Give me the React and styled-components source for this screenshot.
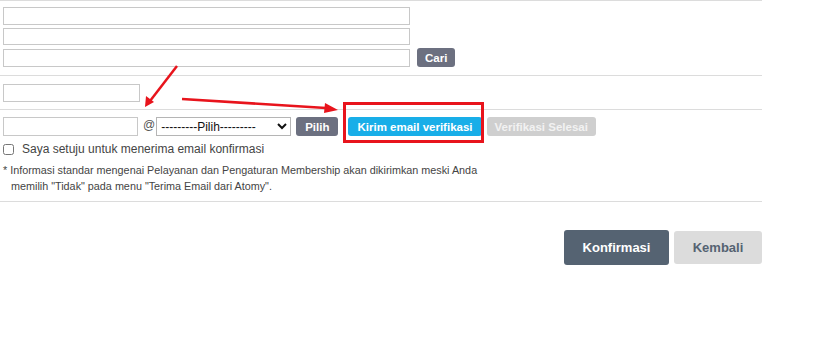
import React from "react";
import styled, { createGlobalStyle } from "styled-components";

const GlobalStyle = createGlobalStyle`
  html, body {
    margin: 0;
    padding: 0;
    background: #fff;
    font-family: "Liberation Sans", Arial, sans-serif;
    color: #333;
  }
`;

const Page = styled.div`
  position: relative;
  width: 762px;
  height: 347px;
`;

const Section = styled.div`
  border-top: 1px solid #dcdcdc;
  padding: ${(p) => p.$pad || "6px 3px"};
  display: flex;
  flex-direction: column;
  gap: ${(p) => p.$gap || "3px"};
`;

const Row = styled.div`
  display: flex;
  align-items: center;
  gap: ${(p) => p.$gap || "6px"};
`;

const TextInput = styled.input`
  box-sizing: border-box;
  width: ${(p) => p.$w}px;
  height: ${(p) => p.$h || 18}px;
  margin: 0;
  border: 1px solid #c8c8c8;
  padding: 0 4px;
  font: inherit;
`;

const SmallButton = styled.button`
  box-sizing: border-box;
  height: 19px;
  padding: 0 ${(p) => p.$px || 9}px;
  margin-left: ${(p) => p.$ml || 0}px;
  border: none;
  border-radius: 3px;
  font-family: "Liberation Sans", Arial, sans-serif;
  font-size: 11.5px;
  font-weight: bold;
  color: ${(p) => (p.$tone === "off" ? "#f2f2f2" : "#fff")};
  background: ${(p) =>
    p.$tone === "blue" ? "#18aee8" : p.$tone === "off" ? "#cfcfcf" : "#6c7080"};
  white-space: nowrap;
`;

const At = styled.span`
  font-size: 12px;
  color: #555;
  margin: -4px -4px 0 0;
`;

const Select = styled.select`
  box-sizing: border-box;
  width: 135px;
  height: 19px;
  margin: 0;
  border: 1px solid #b5b5b5;
  font-family: "Liberation Sans", Arial, sans-serif;
  font-size: 12px;
  color: #111;
  background: #fff;
`;

const Check = styled.label`
  display: flex;
  align-items: center;
  gap: 8px;
  font-size: 12px;
  color: #444;
  margin-top: 6px;

  input {
    margin: 0;
    width: 11px;
    height: 11px;
  }
`;

const Note = styled.p`
  margin: 6px 0 -1px;
  font-size: 10.8px;
  line-height: 16px;
  color: #444;
  text-indent: -8px;
  padding-left: 8px;
`;

const Actions = styled.div`
  border-top: 1px solid #dcdcdc;
  display: flex;
  justify-content: flex-end;
  align-items: center;
  gap: 5px;
  padding-top: 28px;
`;

const BigButton = styled.button`
  box-sizing: border-box;
  width: ${(p) => p.$w}px;
  height: ${(p) => (p.$primary ? 35 : 33)}px;
  border: none;
  border-radius: 3px;
  font-family: "Liberation Sans", Arial, sans-serif;
  font-size: 13px;
  font-weight: bold;
  color: ${(p) => (p.$primary ? "#fff" : "#556372")};
  background: ${(p) => (p.$primary ? "#556372" : "#dcdcdc")};
`;

const Highlight = styled.div`
  position: absolute;
  left: 343px;
  top: 102px;
  width: 141px;
  height: 41px;
  box-sizing: border-box;
  border: 3px solid #e8141c;
  pointer-events: none;
`;

const Arrows = styled.svg`
  position: absolute;
  left: 0;
  top: 0;
  pointer-events: none;
`;

export default function App() {
  return (
    <>
      <GlobalStyle />
      <Page>
        <Section $pad="6px 3px 8px" $gap="3px">
          <TextInput $w={407} $h={18} />
          <TextInput $w={407} $h={17} />
          <Row $gap="7px">
            <TextInput $w={407} $h={18} />
            <SmallButton $px={8}>Cari</SmallButton>
          </Row>
        </Section>
        <Section $pad="8px 3px 7px">
          <TextInput $w={137} $h={18} />
        </Section>
        <Section $pad="7px 3px 8px" $gap="0px">
          <Row $gap="5px">
            <TextInput $w={135} $h={19} />
            <At>@</At>
            <Select defaultValue="">
              <option value="">---------Pilih---------</option>
            </Select>
            <SmallButton>Pilih</SmallButton>
            <SmallButton $tone="blue" $ml={5}>Kirim email verifikasi</SmallButton>
            <SmallButton $tone="off" $px={8}>Verifikasi Selesai</SmallButton>
          </Row>
          <Check>
            <input type="checkbox" />
            Saya setuju untuk menerima email konfirmasi
          </Check>
          <Note>
            * Informasi standar mengenai Pelayanan dan Pengaturan Membership akan dikirimkan meski Anda
            <br />
            memilih "Tidak" pada menu "Terima Email dari Atomy".
          </Note>
        </Section>
        <Actions>
          <BigButton $primary $w={105}>Konfirmasi</BigButton>
          <BigButton $w={88}>Kembali</BigButton>
        </Actions>

        <Highlight />
        <Arrows width="762" height="347" viewBox="0 0 762 347">
          <line x1="177" y1="66" x2="150" y2="101" stroke="#e8141c" strokeWidth="2.5" />
          <path d="M145,107 L146,96 L154,102 Z" fill="#e8141c" />
          <line x1="182" y1="99" x2="326" y2="108" stroke="#e8141c" strokeWidth="2.5" />
          <path d="M338,110 L325,103 L324,113 Z" fill="#e8141c" />
        </Arrows>
      </Page>
    </>
  );
}
